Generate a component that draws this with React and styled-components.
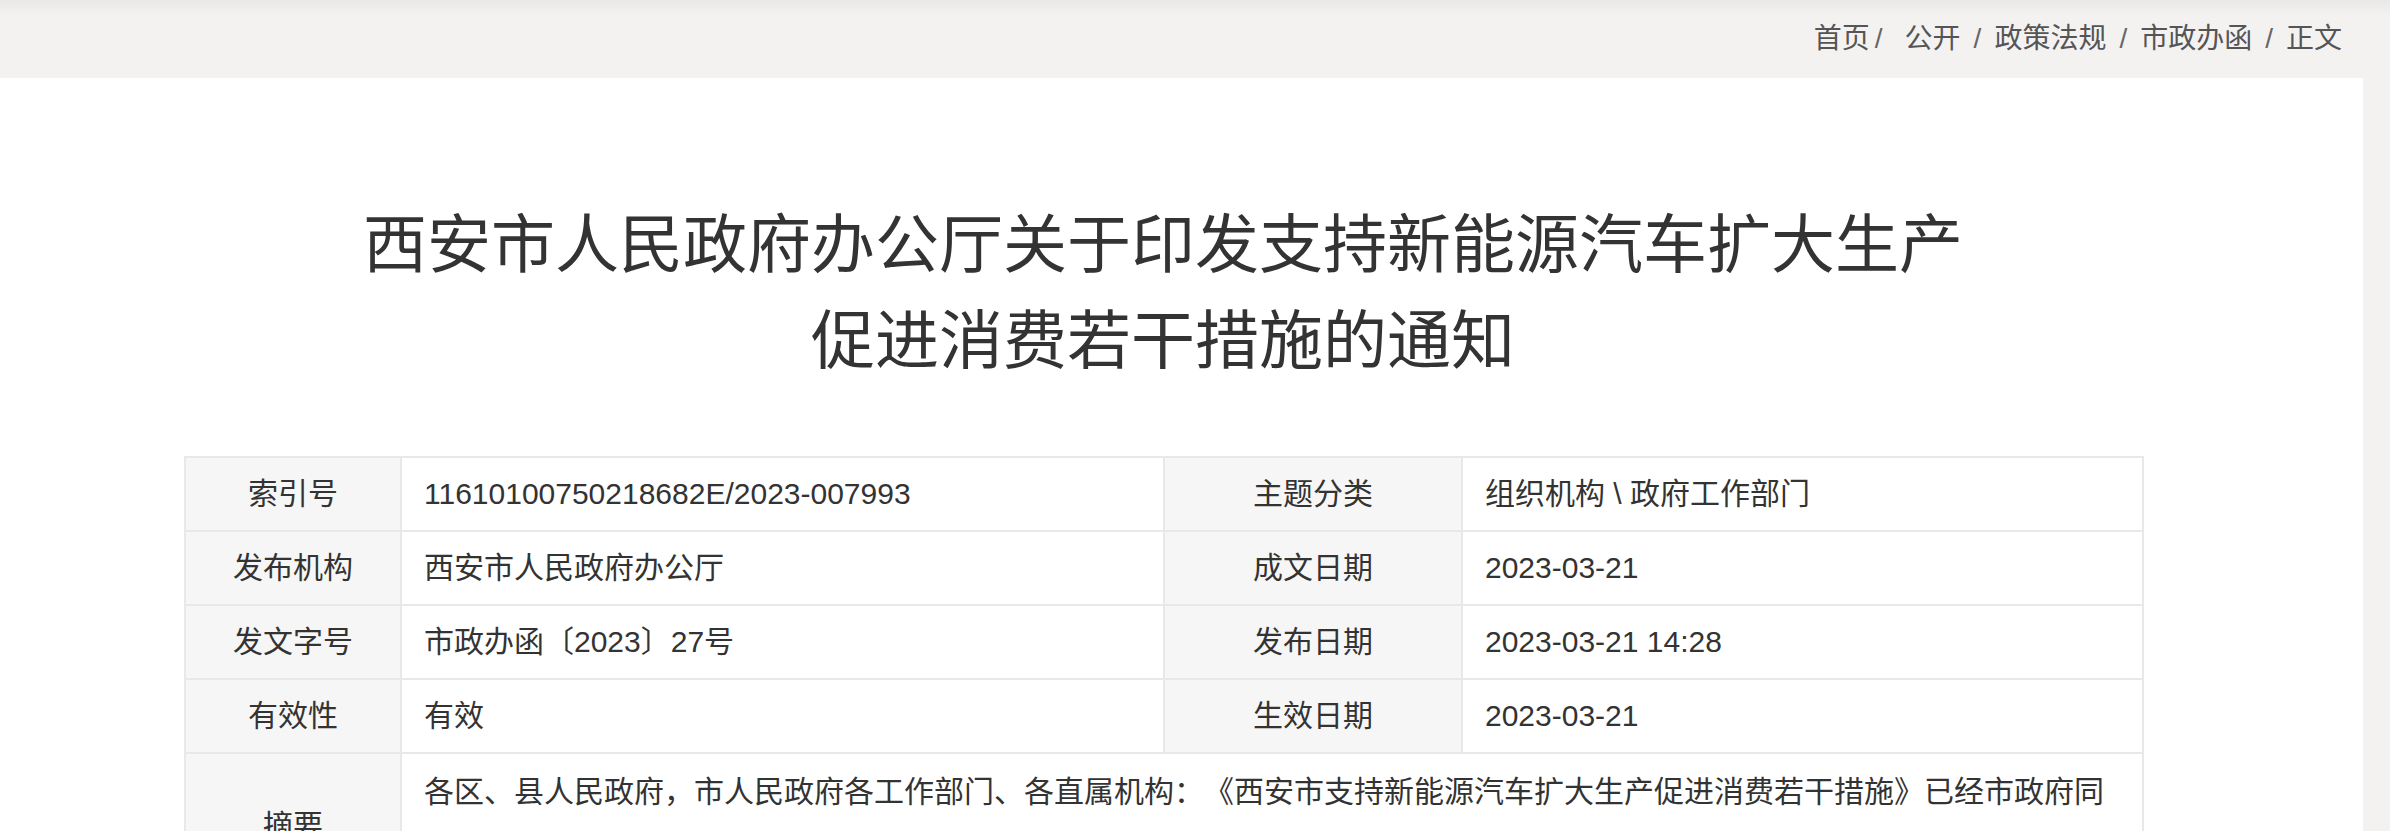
import React from "react";
import styled, { createGlobalStyle } from "styled-components";

const GlobalStyle = createGlobalStyle`
  html, body {
    margin: 0;
    padding: 0;
    background: #f4f2f1;
  }
  body {
    font-family: "Liberation Sans", "Noto Sans CJK SC", sans-serif;
    color: #333;
    text-spacing-trim: space-all;
  }
`;

const Page = styled.div`
  width: 100%;
  min-height: 831px;
  background: linear-gradient(#e8e8e8 0, #f4f2f1 16px, #f4f2f1 100%);
`;

const Container = styled.div`
  width: 2363px;
`;

const TopBar = styled.div`
  height: 78px;
  display: flex;
  align-items: center;
  justify-content: flex-end;
  padding-right: 21px;
  box-sizing: border-box;
`;

const Crumbs = styled.nav`
  display: flex;
  align-items: center;
  font-size: 28px;
  line-height: 28px;
  color: #555;
`;

const Sep = styled.span`
  margin: ${(p) => (p.$first ? "0 22px 0 5px" : "0 13px")};
  color: #666;
`;

const Panel = styled.main`
  background: #fff;
  padding: 119px 221px 0 184px;
  min-height: 753px;
  box-sizing: border-box;
`;

const Title = styled.h1`
  margin: 0 0 67px;
  font-size: 64px;
  line-height: 96px;
  font-weight: 400;
  text-align: center;
  color: #333;
`;

const InfoTable = styled.table`
  width: 1958px;
  border-collapse: collapse;
  table-layout: fixed;
  border: 2px solid #e8e8e8;
  font-size: 30px;
  color: #333;
`;

const Label = styled.th`
  background: #f6f6f6;
  border: 2px solid #e8e8e8;
  font-weight: 400;
  text-align: center;
  padding: 14px 10px;
  line-height: 44px;
`;

const Value = styled.td`
  border: 2px solid #e8e8e8;
  padding: ${(p) => (p.$tall ? "8px 22px 16px" : "14px 22px")};
  line-height: ${(p) => (p.$tall ? "60px" : "44px")};
  text-align: left;
  vertical-align: ${(p) => (p.$tall ? "top" : "middle")};
`;

const crumbs = ["首页", "公开", "政策法规", "市政办函", "正文"];

const rows = [
  ["索引号", "11610100750218682E/2023-007993", "主题分类", "组织机构 \\ 政府工作部门"],
  ["发布机构", "西安市人民政府办公厅", "成文日期", "2023-03-21"],
  ["发文字号", "市政办函〔2023〕27号", "发布日期", "2023-03-21 14:28"],
  ["有效性", "有效", "生效日期", "2023-03-21"],
];

const summary =
  "各区、县人民政府，市人民政府各工作部门、各直属机构：《西安市支持新能源汽车扩大生产促进消费若干措施》已经市政府同意，现印发给你们，请认真贯彻执行。";

const App = () => {
  return (
    <Page>
      <GlobalStyle />
      <Container>
        <TopBar>
          <Crumbs>
            {crumbs.map((c, i) => (
              <React.Fragment key={c}>
                {i > 0 && <Sep $first={i === 1}>/</Sep>}
                <span>{c}</span>
              </React.Fragment>
            ))}
          </Crumbs>
        </TopBar>
        <Panel>
          <Title>
            西安市人民政府办公厅关于印发支持新能源汽车扩大生产
            <br />
            促进消费若干措施的通知
          </Title>
          <InfoTable>
            <colgroup>
              <col style={{ width: 216 }} />
              <col style={{ width: 763 }} />
              <col style={{ width: 298 }} />
              <col style={{ width: 681 }} />
            </colgroup>
            <tbody>
              {rows.map((r) => (
                <tr key={r[0]}>
                  <Label>{r[0]}</Label>
                  <Value>{r[1]}</Value>
                  <Label>{r[2]}</Label>
                  <Value>{r[3]}</Value>
                </tr>
              ))}
              <tr>
                <Label>摘要</Label>
                <Value colSpan={3} $tall>
                  {summary}
                </Value>
              </tr>
            </tbody>
          </InfoTable>
        </Panel>
      </Container>
    </Page>
  );
};

export default App;
